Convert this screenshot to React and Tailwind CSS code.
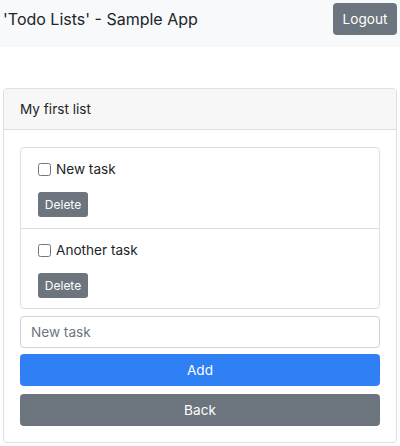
const TASKS = ["New task", "Another task"]

export default function App() {
  return (
    <div className="w-[400px] h-[446px] bg-white text-[#212529] font-['Inter','Liberation_Sans',sans-serif] overflow-hidden">
      <nav className="h-[47px] bg-[#f8f9fa] flex items-start justify-between pl-[3px] pr-[3px] pt-[3px]">
        <span className="text-[16px] leading-[32px]">'Todo Lists' - Sample App</span>
        <button
          type="button"
          className="h-[32px] w-[64px] rounded-[4px] bg-[#6c757d] text-white text-[13.6px]"
        >
          Logout
        </button>
      </nav>

      <div className="mt-[41px] mx-[3px] border border-[#dfdfdf] rounded-[4px] overflow-hidden">
        <div className="h-[41px] bg-[#f7f7f7] border-b border-[#dfdfdf] px-[16px] flex items-center text-[13.6px]">
          My first list
        </div>
        <div className="pt-[17px] pb-[16px] px-[16px] flex flex-col">
          <div className="border border-[#dfdfdf] rounded-[4px]">
            {TASKS.map((task, i) => (
              <div
                key={task}
                className={`h-[80px] px-[17px] pt-[12px] ${i > 0 ? "border-t border-[#dfdfdf]" : ""}`}
              >
                <label className="flex items-center gap-[5px] text-[13.6px] h-[18px]">
                  <input type="checkbox" className="w-[13px] h-[13px] m-0" />
                  {task}
                </label>
                <button
                  type="button"
                  className="mt-[14px] h-[25px] w-[50px] rounded-[3px] bg-[#6c757d] text-white text-[12px]"
                >
                  Delete
                </button>
              </div>
            ))}
          </div>
          <input
            type="text"
            placeholder="New task"
            className="mt-[7px] h-[32px] w-full border border-[#ced4da] rounded-[4px] px-[10px] text-[13.6px] placeholder:text-[#6c757d] outline-none"
          />
          <button
            type="button"
            className="mt-[6px] h-[32px] w-full rounded-[4px] bg-[#3080f5] text-white text-[13.6px]"
          >
            Add
          </button>
          <button
            type="button"
            className="mt-[8px] h-[32px] w-full rounded-[4px] bg-[#6c757d] text-white text-[13.6px]"
          >
            Back
          </button>
        </div>
      </div>
    </div>
  )
}
